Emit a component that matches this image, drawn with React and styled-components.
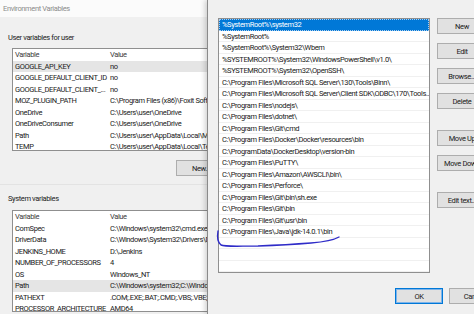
import React from 'react';
import styled, { createGlobalStyle } from 'styled-components';

const GlobalStyle = createGlobalStyle`
  html, body {
    margin: 0;
    padding: 0;
  }
  body {
    width: 474px;
    height: 314px;
    overflow: hidden;
    background: #f0f0f0;
    font-family: Roboto, "Liberation Sans", Arial, sans-serif;
    font-size: 7.5px;
    letter-spacing: -0.38px;
    color: #1a1a1a;
  }
`;

const Desktop = styled.div`
  position: relative;
  width: 474px;
  height: 314px;
  overflow: hidden;
`;

const BackWindow = styled.div`
  display: flex;
  flex-direction: column;
  width: 290px;
  height: 314px;
  background: #f0f0f0;
`;

const TitleBar = styled.div`
  height: 17px;
  display: flex;
  align-items: center;
  padding-left: 3px;
  background: #fbfbfb;
  color: #8c8c8c;
`;

const Section = styled.div`
  display: flex;
  flex-direction: column;
  padding: 0 0 0 8px;
  margin-top: ${({ top }) => top}px;
`;

const GroupLabel = styled.div`
  height: 10px;
  line-height: 10px;
  color: #222;
`;

const ListView = styled.div`
  margin: ${({ gap }) => gap}px 0 0 4px;
  height: ${({ h }) => h}px;
  background: #fff;
  border: 1px solid #8f8f8f;
  overflow: hidden;
`;

const VarRow = styled.div`
  display: grid;
  grid-template-columns: 95px 1fr;
  height: 11.5px;
  line-height: 11.5px;
  white-space: nowrap;
  background: ${({ selected }) => (selected ? '#e5e5e5' : 'transparent')};
  color: ${({ head }) => (head ? '#3c3c3c' : '#1a1a1a')};
`;

const Cell = styled.div`
  padding-left: 2px;
  overflow: hidden;
`;

const ButtonRow = styled.div`
  display: flex;
  padding-left: 176px;
  margin-top: 9px;
`;

const WinButton = styled.div`
  box-sizing: border-box;
  width: ${({ w }) => w || 50}px;
  height: 16px;
  display: flex;
  align-items: center;
  justify-content: center;
  background: #e1e1e1;
  border: 1px solid ${({ primary }) => (primary ? '#0078d7' : '#adadad')};
  box-shadow: ${({ primary }) => (primary ? 'inset 0 0 0 1px #7eb4ea' : 'none')};
  color: #1a1a1a;
  white-space: nowrap;
  flex-shrink: 0;
`;

const Separator = styled.div`
  height: 1px;
  margin: 8px 0 0 0;
  background: #e3e3e3;
`;

const FrontWindow = styled.div`
  position: absolute;
  left: 207px;
  top: 0;
  width: 280px;
  height: 314px;
  box-sizing: border-box;
  background: #f0f0f0;
  border-left: 1px solid #8a8a8a;
  box-shadow: -2px 0 5px rgba(0, 0, 0, 0.18);
  display: flex;
  flex-direction: column;
  padding: 18px 0 0 10px;
`;

const EditBody = styled.div`
  display: flex;
  gap: 7px;
`;

const PathList = styled.div`
  width: 222px;
  height: 255px;
  box-sizing: border-box;
  background: #fff;
  border: 1px solid #8f8f8f;
  overflow: hidden;
`;

const PathRow = styled.div`
  height: 11.5px;
  line-height: 11px;
  padding-left: 3px;
  white-space: nowrap;
  box-sizing: border-box;
  border-bottom: 1px solid ${({ selected }) => (selected ? '#0078d7' : '#f0f0f0')};
  background: ${({ selected }) => (selected ? '#0078d7' : '#fff')};
  color: ${({ selected }) => (selected ? '#fff' : '#1a1a1a')};
  outline: ${({ selected }) => (selected ? '1px dotted #a8cdf0' : 'none')};
  outline-offset: -1px;
`;

const ButtonColumn = styled.div`
  display: flex;
  flex-direction: column;
  gap: 9px;
`;

const ButtonBreak = styled.div`
  height: 3px;
`;

const Footer = styled.div`
  display: flex;
  gap: 6px;
  padding-left: 177px;
  margin-top: 15px;
`;

const Scribble = styled.svg`
  position: absolute;
  left: 0;
  top: 0;
  width: 280px;
  height: 314px;
  pointer-events: none;
`;

const userVars = [
  ['GOOGLE_API_KEY', 'no', true],
  ['GOOGLE_DEFAULT_CLIENT_ID', 'no'],
  ['GOOGLE_DEFAULT_CLIENT_...', 'no'],
  ['MOZ_PLUGIN_PATH', 'C:\\Program Files (x86)\\Foxit Software\\Foxit Reader\\plugins\\'],
  ['OneDrive', 'C:\\Users\\user\\OneDrive'],
  ['OneDriveConsumer', 'C:\\Users\\user\\OneDrive'],
  ['Path', 'C:\\Users\\user\\AppData\\Local\\Microsoft\\WindowsApps;'],
  ['TEMP', 'C:\\Users\\user\\AppData\\Local\\Temp'],
];

const systemVars = [
  ['ComSpec', 'C:\\Windows\\system32\\cmd.exe'],
  ['DriverData', 'C:\\Windows\\System32\\Drivers\\DriverData'],
  ['JENKINS_HOME', 'D:\\Jenkins'],
  ['NUMBER_OF_PROCESSORS', '4'],
  ['OS', 'Windows_NT'],
  ['Path', 'C:\\Windows\\system32;C:\\Windows;C:\\Windows\\System32\\Wbem;', true],
  ['PATHEXT', '.COM;.EXE;.BAT;.CMD;.VBS;.VBE;.JS;.JSE;.WSF;.WSH;.MSC'],
  ['PROCESSOR_ARCHITECTURE', 'AMD64'],
];

const paths = [
  '%SystemRoot%\\system32',
  '%SystemRoot%',
  '%SystemRoot%\\System32\\Wbem',
  '%SYSTEMROOT%\\System32\\WindowsPowerShell\\v1.0\\',
  '%SYSTEMROOT%\\System32\\OpenSSH\\',
  'C:\\Program Files\\Microsoft SQL Server\\130\\Tools\\Binn\\',
  'C:\\Program Files\\Microsoft SQL Server\\Client SDK\\ODBC\\170\\Tools...',
  'C:\\Program Files\\nodejs\\',
  'C:\\Program Files\\dotnet\\',
  'C:\\Program Files\\Git\\cmd',
  'C:\\Program Files\\Docker\\Docker\\resources\\bin',
  'C:\\ProgramData\\DockerDesktop\\version-bin',
  'C:\\Program Files\\PuTTY\\',
  'C:\\Program Files\\Amazon\\AWSCLI\\bin\\',
  'C:\\Program Files\\Perforce\\',
  'C:\\Program Files\\Git\\bin\\sh.exe',
  'C:\\Program Files\\Git\\bin',
  'C:\\Program Files\\Git\\usr\\bin',
  'C:\\Program Files\\Java\\jdk-14.0.1\\bin',
  '', '', '', '',
];

const VarList = ({ rows, h, gap }) => (
  <ListView h={h} gap={gap}>
    <VarRow head>
      <Cell>Variable</Cell>
      <Cell>Value</Cell>
    </VarRow>
    {rows.map(([name, value, selected]) => (
      <VarRow key={name + value} selected={selected}>
        <Cell>{name}</Cell>
        <Cell>{value}</Cell>
      </VarRow>
    ))}
  </ListView>
);

const App = () => (
  <Desktop>
    <GlobalStyle />
    <BackWindow>
      <TitleBar>Environment Variables</TitleBar>
      <Section top={16}>
        <GroupLabel>User variables for user</GroupLabel>
        <VarList rows={userVars} h={101} gap={5} />
      </Section>
      <ButtonRow>
        <WinButton>New...</WinButton>
      </ButtonRow>
      <Separator />
      <Section top={9}>
        <GroupLabel>System variables</GroupLabel>
        <VarList rows={systemVars} h={100} gap={6} />
      </Section>
    </BackWindow>

    <FrontWindow>
      <EditBody>
        <PathList>
          {paths.map((p, i) => (
            <PathRow key={i} selected={i === 0}>{p || '\u00a0'}</PathRow>
          ))}
        </PathList>
        <ButtonColumn>
          <WinButton>New</WinButton>
          <WinButton>Edit</WinButton>
          <WinButton>Browse...</WinButton>
          <WinButton>Delete</WinButton>
          <ButtonBreak />
          <WinButton>Move Up</WinButton>
          <WinButton>Move Down</WinButton>
          <ButtonBreak />
          <WinButton>Edit text...</WinButton>
        </ButtonColumn>
      </EditBody>
      <Footer>
        <WinButton primary w={48}>OK</WinButton>
        <WinButton>Cancel</WinButton>
      </Footer>
      <Scribble viewBox="0 0 280 314">
        <path
          d="M10 231 C 9 237, 9 242, 13 245 C 17 247, 30 246, 50 246 C 75 245, 90 244, 103 243 C 115 242, 124 241, 131 237"
          fill="none"
          stroke="#2f2cc8"
          strokeWidth="1.4"
          strokeLinecap="round"
        />
      </Scribble>
    </FrontWindow>
  </Desktop>
);

export default App;
